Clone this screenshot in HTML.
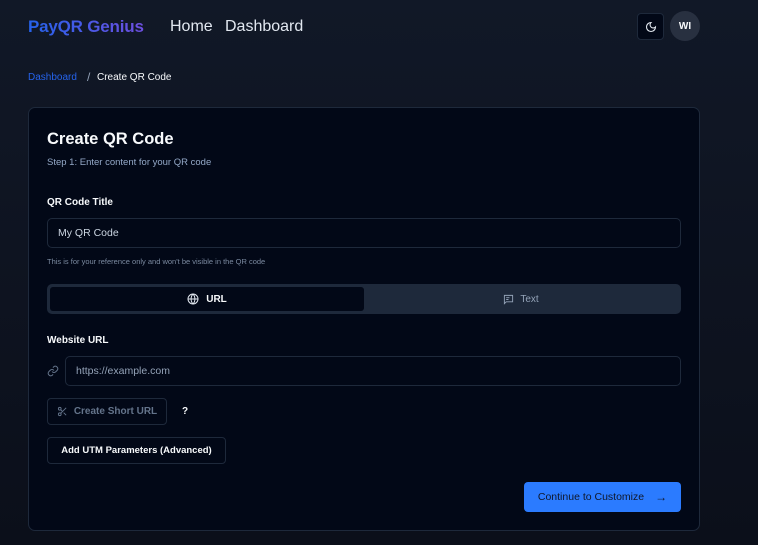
<!DOCTYPE html>
<html><head><style>
*{box-sizing:border-box;margin:0;padding:0}
body{width:758px;height:545px;overflow:hidden;font-family:"Liberation Sans",sans-serif;background:linear-gradient(#111827,#0b0f1a);color:#f8fafc;position:relative}
.a{position:absolute;white-space:nowrap}
.inp{position:absolute;border:1px solid #1e293b;border-radius:5px;font-size:10.5px;color:#cbd5e1;padding-left:10px;display:flex;align-items:center}
.btn{position:absolute;border:1px solid #1e293b;border-radius:4px;font-size:10px;font-weight:bold;display:flex;align-items:center;justify-content:center;white-space:nowrap}
</style></head><body>
<div class="a" style="left:28px;top:17px;font-size:17px;letter-spacing:-0.2px;font-weight:bold;background:linear-gradient(90deg,#2563eb,#6d4fe0);-webkit-background-clip:text;color:transparent">PayQR Genius</div>
<div class="a" style="left:170px;top:18px;font-size:16px;color:#e2e8f0">Home</div>
<div class="a" style="left:225px;top:18px;font-size:16px;color:#e2e8f0">Dashboard</div>
<div class="a" style="left:637px;top:13px;width:27px;height:27px;border:1px solid #1e293b;border-radius:4px;background:#020817;display:flex;align-items:center;justify-content:center">
<svg width="12" height="12" viewBox="0 0 24 24" fill="none" stroke="#e2e8f0" stroke-width="2.2"><path d="M12 3a6 6 0 0 0 9 9 9 9 0 1 1-9-9Z"/></svg></div>
<div class="a" style="left:670px;top:11px;width:30px;height:30px;border-radius:50%;background:#283040;font-size:10px;font-weight:bold;display:flex;align-items:center;justify-content:center">WI</div>
<div class="a" style="left:28px;top:72px;font-size:10px;color:#2563eb">Dashboard</div>
<div class="a" style="left:87px;top:70px;font-size:12px;color:#94a3b8">/</div>
<div class="a" style="left:97px;top:72px;font-size:10px;color:#f8fafc">Create QR Code</div>

<div class="a" style="left:28px;top:107px;width:672px;height:424px;background:#020817;border:1px solid #1e293b;border-radius:7px"></div>
<div class="a" style="left:47px;top:130px;font-size:16.5px;font-weight:bold">Create QR Code</div>
<div class="a" style="left:47px;top:157px;font-size:9.5px;color:#94a9c8">Step 1: Enter content for your QR code</div>
<div class="a" style="left:47px;top:197px;font-size:10px;font-weight:bold">QR Code Title</div>
<div class="inp" style="left:47px;top:218px;width:634px;height:30px">My QR Code</div>
<div class="a" style="left:47px;top:257px;font-size:7.5px;color:#7b8aa0">This is for your reference only and won't be visible in the QR code</div>
<div class="a" style="left:47px;top:284px;width:634px;height:30px;background:#1e293b;border-radius:5px"></div>
<div class="a" style="left:50px;top:287px;width:314px;height:24px;background:#020817;border-radius:3px;display:flex;align-items:center;justify-content:center;font-size:10px;font-weight:bold">
<svg width="12" height="12" viewBox="0 0 24 24" fill="none" stroke="#e2e8f0" stroke-width="2" style="margin-right:7px"><circle cx="12" cy="12" r="10"/><path d="M2 12h20M12 2a15 15 0 0 1 0 20M12 2a15 15 0 0 0 0 20"/></svg>URL</div>
<div class="a" style="left:364px;top:287px;width:314px;height:24px;display:flex;align-items:center;justify-content:center;font-size:10px;color:#94a3b8">
<svg width="11" height="11" viewBox="0 0 24 24" fill="none" stroke="#94a3b8" stroke-width="2" style="margin-right:6px"><path d="M3 3h18v14H7l-4 4z"/><path d="M7 8h7M7 12h5"/></svg>Text</div>
<div class="a" style="left:47px;top:335px;font-size:10px;font-weight:bold">Website URL</div>
<svg class="a" style="left:47px;top:365px" width="12" height="12" viewBox="0 0 24 24" fill="none" stroke="#64748b" stroke-width="2"><path d="M10 13a5 5 0 0 0 7.5.5l3-3a5 5 0 0 0-7-7l-1.7 1.7"/><path d="M14 11a5 5 0 0 0-7.5-.5l-3 3a5 5 0 0 0 7 7l1.7-1.7"/></svg>
<div class="inp" style="left:65px;top:356px;width:616px;height:30px;color:#94a3b8">https://example.com</div>
<div class="btn" style="left:47px;top:398px;width:120px;height:27px;color:#64748b">
<svg width="11" height="11" viewBox="0 0 24 24" fill="none" stroke="#64748b" stroke-width="2" style="margin-right:6px"><circle cx="6" cy="6" r="3"/><circle cx="6" cy="18" r="3"/><path d="M20 4 8.1 15.9M14.5 14.5 20 20M8.1 8.1 12 12"/></svg>Create Short URL</div>
<div class="a" style="left:182px;top:406px;font-size:10px;font-weight:bold">?</div>
<div class="btn" style="left:47px;top:437px;width:179px;height:27px;color:#f8fafc;font-size:9.5px">Add UTM Parameters (Advanced)</div>
<div class="a" style="left:524px;top:482px;width:157px;height:30px;background:#2b7bff;border-radius:4px;display:flex;align-items:center;justify-content:center;font-size:10.5px;color:#0f172a">Continue to Customize<span style="margin-left:11px;font-size:12px">→</span></div>
</body></html>
